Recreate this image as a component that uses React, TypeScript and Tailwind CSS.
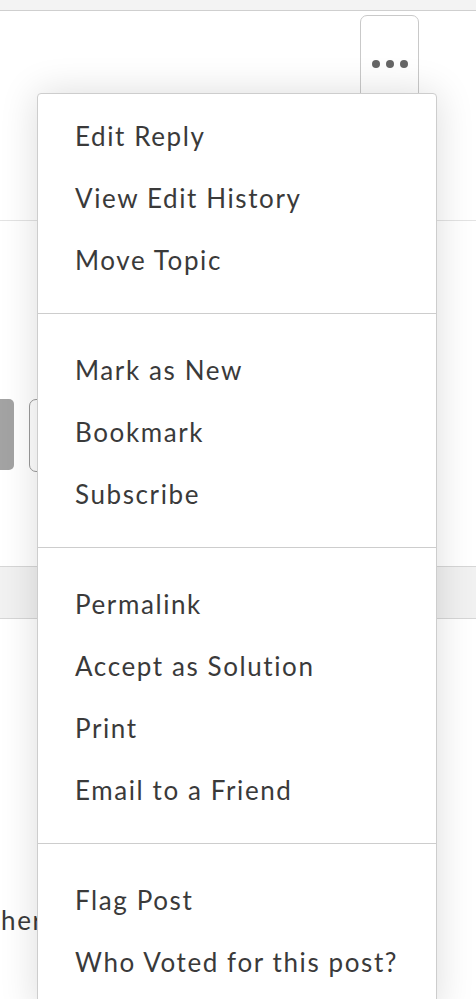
import React from "react";

const sections: string[][] = [
  ["Edit Reply", "View Edit History", "Move Topic"],
  ["Mark as New", "Bookmark", "Subscribe"],
  ["Permalink", "Accept as Solution", "Print", "Email to a Friend"],
  ["Flag Post", "Who Voted for this post?"],
];

// Menú de opciones del post, abierto sobre el hilo (el fondo queda detrás)
function OptionsMenu() {
  return (
    <div className="absolute left-[37px] top-[93px] z-10 w-[400px] h-[920px] rounded-[4px] border border-[#cdcdcd] bg-white shadow-[0_0_38px_rgba(0,0,0,0.14)]">
      {sections.map((items, i) => (
        <ul
          key={i}
          className={
            i === 0
              ? "pt-[11px] pb-[22px] border-b border-[#cdcdcd]"
              : i === sections.length - 1
                ? "pt-[25px]"
                : "pt-[25px] pb-[22px] border-b border-[#cdcdcd]"
          }
        >
          {items.map((label) => (
            <li
              key={label}
              className="flex h-[62px] items-center pl-[37px] text-[26px] tracking-[1.6px] text-[#3a3a3a]"
            >
              {label}
            </li>
          ))}
        </ul>
      ))}
    </div>
  );
}

export default function App() {
  return (
    <div className="relative h-[999px] w-[476px] overflow-hidden bg-white font-['Lato','Liberation_Sans',sans-serif]">
      {/* barra superior */}
      <div className="h-[11px] border-b border-[#cfcfcf] bg-[#f3f3f3]" />

      {/* botón "..." que abre el menú */}
      <div className="flex justify-end pr-[57px] pt-[4px]">
        <button className="flex h-[82px] w-[59px] items-start justify-center gap-[6px] rounded-t-[7px] border border-[#c9c9c9] bg-white pt-[44px]">
          <span className="h-[8px] w-[8px] rounded-full bg-[#666]" />
          <span className="h-[8px] w-[8px] rounded-full bg-[#666]" />
          <span className="h-[8px] w-[8px] rounded-full bg-[#666]" />
        </button>
      </div>

      <div className="mt-[123px] h-px bg-[#e3e3e3]" />

      {/* botones del post, tapados por el menú */}
      <div className="mt-[178px] flex items-start gap-[15px]">
        <div className="h-[71px] w-[14px] rounded-r-[5px] bg-[#a3a3a3]" />
        <div className="h-[73px] w-[120px] rounded-l-[7px] border border-[#9a9a9a]" />
      </div>

      <div className="mt-[94px] h-[53px] border-y border-[#d6d6d6] bg-[#f1f1f1]" />

      <p className="mt-[282px] -ml-[26px] text-[26px] tracking-[1.6px] text-[#3a3a3a]">other</p>

      <OptionsMenu />
    </div>
  );
}
